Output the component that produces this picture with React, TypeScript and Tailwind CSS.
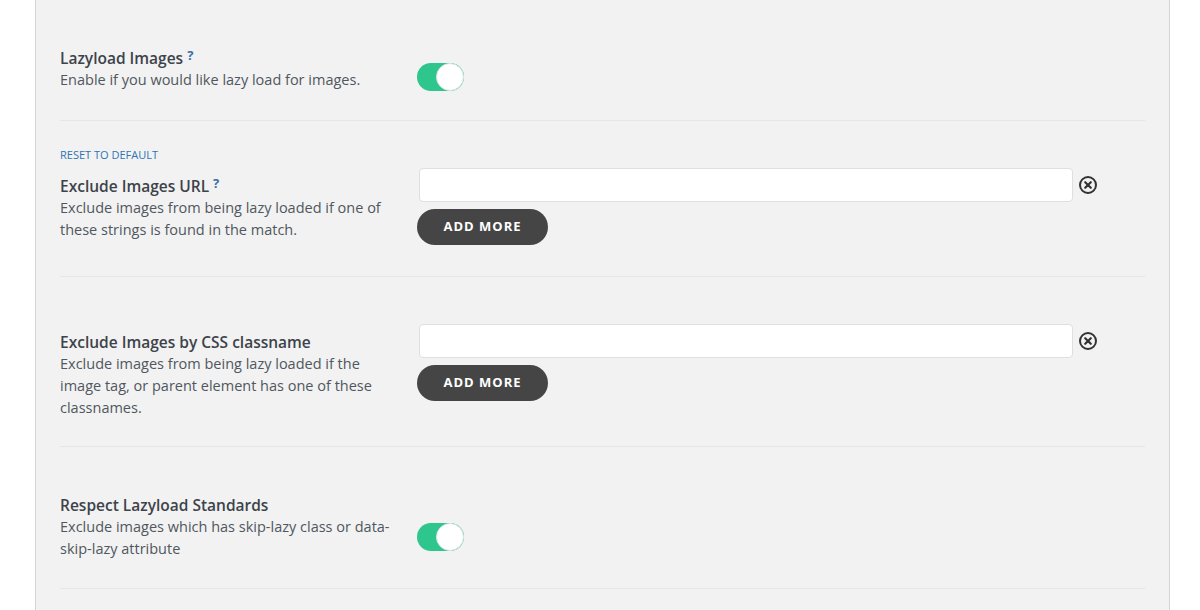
import React from "react";

function Help() {
    return (
        <sup className="ml-[4px] text-[13px] font-bold text-[#3a6ea5] relative -top-[4px]">
            ?
        </sup>
    );
}

function Toggle({ className }: { className: string }) {
    return (
        <div
            className={`w-[47px] h-[28px] rounded-full bg-[#2fc68e] flex justify-end ${className}`}
        >
            <div className="w-[28px] h-[28px] rounded-full bg-white border border-[#dde2e6]" />
        </div>
    );
}

function CloseIcon() {
    return (
        <svg width="20" height="20" viewBox="0 0 20 20" fill="none">
            <circle cx="10" cy="10" r="8" stroke="#333" strokeWidth="2" />
            <path
                d="M7.2 7.2l5.6 5.6M12.8 7.2l-5.6 5.6"
                stroke="#333"
                strokeWidth="2.2"
                strokeLinecap="round"
            />
        </svg>
    );
}

function ListField() {
    return (
        <div className="flex flex-col pt-[47px]">
            <div className="flex items-center">
                <input className="ml-[2px] w-[654px] h-[34px] bg-white border border-[#dcdfe3] rounded-[4px] px-2 outline-none" />
                <span className="ml-[5px] flex">
                    <CloseIcon />
                </span>
            </div>
            <button className="mt-[7px] w-[131px] h-[36px] rounded-full bg-[#454545] text-white text-[13px] font-bold tracking-[1px]">
                ADD MORE
            </button>
        </div>
    );
}

export default function App() {
    return (
        <div className="w-[1200px] h-[610px] bg-white overflow-hidden font-['Open_Sans',sans-serif]">
            <div className="ml-[35px] w-[1135px] h-full bg-[#f2f2f2] border-x border-[#d5d5d5] px-[24px]">
                {/* Lazyload images */}
                <div className="flex pt-[47px] pb-[29px] border-b border-[#e6e6e6]">
                    <div className="w-[357px]">
                        <div className="text-[15.5px] leading-[22px] font-semibold text-[#3c434a]">
                            Lazyload Images
                            <Help />
                        </div>
                        <div className="text-[14.5px] leading-[22px] text-[#50575e]">
                            Enable if you would like lazy load for images.
                        </div>
                    </div>
                    <Toggle className="mt-[16px]" />
                </div>

                {/* Exclude URL */}
                <div className="flex pb-[31px] border-b border-[#e6e6e6]">
                    <div className="w-[357px] pt-[26px]">
                        <div className="text-[11px] leading-[16px] text-[#2f74b5] mb-3">
                            RESET TO DEFAULT
                        </div>
                        <div className="text-[15.5px] leading-[22px] font-semibold text-[#3c434a]">
                            Exclude Images URL
                            <Help />
                        </div>
                        <div className="text-[14.5px] leading-[22px] text-[#50575e] pr-[20px]">
                            Exclude images from being lazy loaded if one of
                            these strings is found in the match.
                        </div>
                    </div>
                    <ListField />
                </div>

                {/* Exclude CSS class */}
                <div className="flex pb-[27px] border-b border-[#e6e6e6]">
                    <div className="w-[357px] pt-[54px]">
                        <div className="text-[15.5px] leading-[22px] font-semibold text-[#3c434a]">
                            Exclude Images by CSS classname
                        </div>
                        <div className="text-[14.5px] leading-[22px] text-[#50575e] pr-[20px]">
                            Exclude images from being lazy loaded if the image
                            tag, or parent element has one of these classnames.
                        </div>
                    </div>
                    <ListField />
                </div>

                {/* Respect standards */}
                <div className="flex pt-[47px] pb-[28px] border-b border-[#e6e6e6]">
                    <div className="w-[357px]">
                        <div className="text-[15.5px] leading-[22px] font-semibold text-[#3c434a]">
                            Respect Lazyload Standards
                        </div>
                        <div className="text-[14.5px] leading-[22px] text-[#50575e] pr-[20px]">
                            Exclude images which has skip-lazy class or
                            data-skip-lazy attribute
                        </div>
                    </div>
                    <Toggle className="mt-[29px]" />
                </div>
            </div>
        </div>
    );
}
